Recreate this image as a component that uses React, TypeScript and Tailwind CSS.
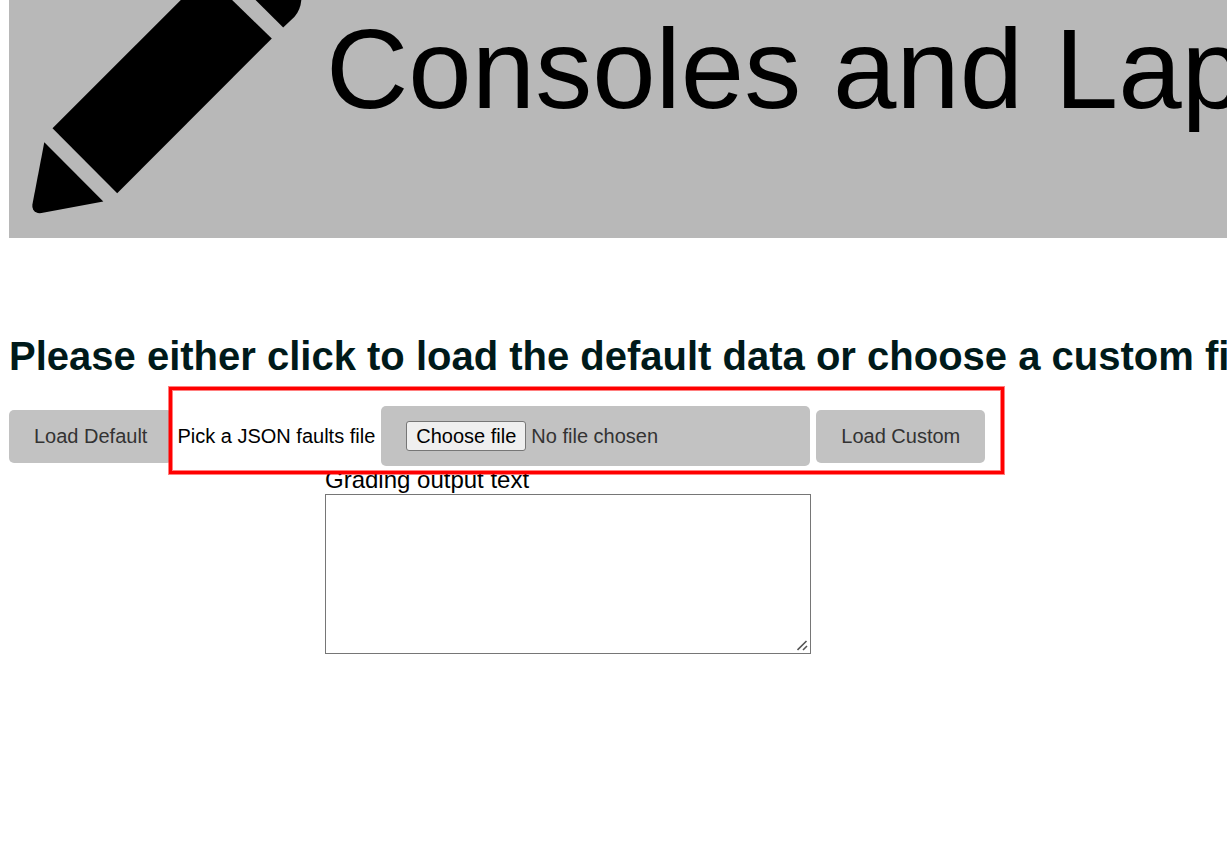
import { useState } from "react";

const buttonClass =
  "h-[53px] shrink-0 rounded-[5px] bg-[#c2c2c2] px-[25px] text-xl text-[#333333]";

function Banner() {
  return (
    <header className="flex h-[238px] items-start overflow-hidden bg-[#b8b8b8]">
      <svg
        className="h-[238px] w-[317px] shrink-0"
        viewBox="9 0 317 238"
        fill="#000"
        aria-hidden="true"
      >
        <path d="M44.3 142.3 L103.3 201.5 L41.5 213 Q36 213.8 33.2 209.7 Q32 207.5 32.4 204.5 Z" />
        <path d="M52.5 128.3 L184.8 -4 L228 -4 L271.8 38.5 L117.2 193.2 Z" />
        <path d="M250.5 -5 L283.2 27.4 L294.3 17 Q301.8 9 301.5 -5 Z" />
      </svg>
      <p className="mt-3 text-[114px] leading-[114px] whitespace-nowrap text-black">
        Consoles and Laptops
      </p>
    </header>
  );
}

export default function App() {
  const [fileName, setFileName] = useState("No file chosen");

  return (
    <main className="min-h-screen overflow-hidden bg-white pl-[9px] font-['Liberation_Sans',Arial,sans-serif] text-black">
      <Banner />
      <h1 className="mt-[94px] text-[40px] leading-[48px] font-bold whitespace-nowrap text-[#001a1a]">
        Please either click to load the default data or choose a custom file
      </h1>

      <div className="mt-[26px] flex items-center gap-[5px]">
        <button type="button" className={buttonClass}>
          Load Default
        </button>
        <div className="relative flex items-center gap-[6px] text-xl whitespace-nowrap">
          <label htmlFor="faults-file">Pick a JSON faults file</label>
          <label
            htmlFor="faults-file"
            className="flex h-[60px] w-[429px] items-center gap-[5px] rounded-[5px] bg-[#c2c2c2] px-[25px] text-[#333333]"
          >
            <input
              id="faults-file"
              type="file"
              accept="application/json"
              className="sr-only"
              onChange={(e) => setFileName(e.target.files?.[0]?.name ?? "No file chosen")}
            />
            <span className="flex h-[30px] items-center rounded-[3px] border border-[#767676] bg-[#efefef] px-[9px] text-black">
              Choose file
            </span>
            <span>{fileName}</span>
          </label>
          <button type="button" className={buttonClass}>
            Load Custom
          </button>
          <div className="pointer-events-none absolute -top-[19px] -right-[19px] -bottom-[8px] -left-[8px] z-10 border-[3px] border-[#ff0000] shadow-[0_0_0_1px_#ff000080,inset_0_0_0_1px_#ff000080]" />
        </div>
      </div>

      <div className="ml-[316px] flex flex-col items-start">
        <label htmlFor="grading-output" className="text-2xl leading-7">
          Grading output text
        </label>
        <div className="relative flex">
          <textarea
            id="grading-output"
            className="h-40 w-[486px] resize rounded-none border border-[#767676] bg-white p-[3px] text-xl outline-none [&::-webkit-resizer]:bg-transparent"
          />
          <svg
            className="pointer-events-none absolute right-[3px] bottom-[3px] h-[11px] w-[11px]"
            viewBox="0 0 11 11"
            stroke="#555"
            strokeWidth="1.6"
            aria-hidden="true"
          >
            <path d="M0.5 10 L9.5 1 M6 10 L10 6" />
          </svg>
        </div>
      </div>
    </main>
  );
}
